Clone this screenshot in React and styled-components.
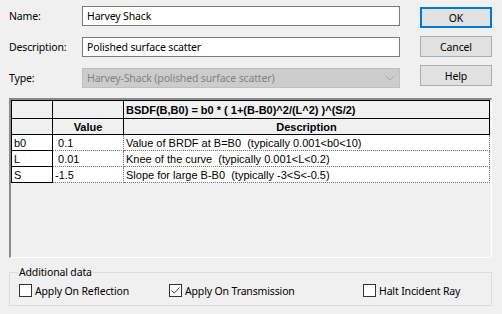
import React, { useState } from 'react';
import styled, { createGlobalStyle } from 'styled-components';

const GlobalStyle = createGlobalStyle`
    html, body {
        margin: 0;
        padding: 0;
        background-color: #f0f0f0;
    }
    * {
        box-sizing: border-box;
    }
`;

const Dialog = styled.div`
    width: 502px;
    height: 314px;
    background-color: #f0f0f0;
    font-family: "Noto Sans", "DejaVu Sans", sans-serif;
    font-size: 10.5px;
    letter-spacing: -0.15px;
    color: #000;
    padding: 6px 10px 0 9px;
    display: flex;
    flex-direction: column;
`;

const TopSection = styled.div`
    display: flex;
    flex-direction: row;
    justify-content: space-between;
`;

const Fields = styled.div`
    display: flex;
    flex-direction: column;
    gap: 11px;
`;

const FieldRow = styled.div`
    display: flex;
    flex-direction: row;
    align-items: center;
    height: 20px;
`;

const Label = styled.label`
    width: 73px;
`;

const TextInput = styled.input`
    width: 318px;
    height: 20px;
    padding: 0 4px;
    border: 1px solid #7a7a7a;
    background-color: #fff;
    font-family: inherit;
    font-size: inherit;
    letter-spacing: inherit;
    color: #000;
    outline: none;
`;

const FakeSelect = styled.div`
    width: 318px;
    height: 20px;
    padding: 0 4px;
    border: 1px solid #bfbfbf;
    background-color: #cccccc;
    color: #838383;
    display: flex;
    align-items: center;
    justify-content: space-between;
`;

const Buttons = styled.div`
    display: flex;
    flex-direction: column;
    gap: 8px;
    padding-top: 1px;
`;

const Button = styled.button`
    width: 72px;
    height: 21px;
    padding: 0;
    background-color: #e1e1e1;
    border: ${(p) => (p.$primary ? '2px solid #0078d7' : '1px solid #adadad')};
    font-family: inherit;
    font-size: inherit;
    letter-spacing: inherit;
    color: #000;
    cursor: pointer;
`;

const TablePanel = styled.div`
    margin-top: 10px;
    width: 483px;
    height: 160px;
    border-top: 2px solid #8a8a8a;
    border-left: 2px solid #8a8a8a;
    border-right: 1px solid #fff;
    border-bottom: 1px solid #fff;
    background-color: #f0f0f0;
`;

const Grid = styled.table`
    border-collapse: collapse;
    font-family: "Liberation Sans", Arial, sans-serif;
    font-size: 11px;
    letter-spacing: 0;
    table-layout: fixed;
    width: 479px;
`;

const HeadCell = styled.td`
    height: ${(p) => p.$h || 16}px;
    border: 1px solid #000;
    padding: 0 2px;
    font-weight: bold;
    text-align: ${(p) => p.$align || 'left'};
    white-space: nowrap;
    overflow: hidden;
`;

const KeyCell = styled.td`
    height: 16px;
    border: 1px solid #000;
    background-color: #fff;
    padding: 0 2px;
`;

const DataCell = styled.td`
    height: 16px;
    border: 1px dotted #7a7a7a;
    border-left: ${(p) => (p.$first ? '1px solid #000' : '1px dotted #7a7a7a')};
    background-color: #fff;
    padding: 0 2px;
    white-space: pre;
    overflow: hidden;
`;

const GroupBox = styled.fieldset`
    margin: 7px 0 0 0;
    width: 483px;
    height: 41px;
    border: 1px solid #dcdcdc;
    padding: 0 9px;
`;

const Legend = styled.legend`
    padding: 0 1px;
    margin-left: -1px;
    line-height: 15px;
`;

const CheckRow = styled.div`
    display: flex;
    flex-direction: row;
    align-items: center;
    padding-top: 4px;
`;

const CheckLabel = styled.label`
    display: flex;
    align-items: center;
    gap: 3px;
    width: ${(p) => (p.$w ? `${p.$w}px` : 'auto')};
    height: 13px;
`;

const Box = styled.span`
    width: 13px;
    height: 13px;
    border: 1px solid #333;
    background-color: #fff;
    display: inline-flex;
    align-items: center;
    justify-content: center;
`;

const rows = [
    { key: 'b0', value: ' 0.1', desc: 'Value of BRDF at B=B0  (typically 0.001<b0<10)' },
    { key: 'L', value: ' 0.01', desc: 'Knee of the curve  (typically 0.001<L<0.2)' },
    { key: 'S', value: '-1.5', desc: 'Slope for large B-B0  (typically -3<S<-0.5)' },
];

const Check = ({ checked, label, w, onToggle }) => (
    <CheckLabel $w={w} onClick={onToggle}>
        <Box>
            {checked && (
                <svg width="11" height="11" viewBox="0 0 11 11">
                    <path d="M1.5 5.5 L4.2 8.2 L9.5 2.5" fill="none" stroke="#444" strokeWidth="1" />
                </svg>
            )}
        </Box>
        {label}
    </CheckLabel>
);

const App = () => {
    const [name, setName] = useState('Harvey Shack');
    const [desc, setDesc] = useState('Polished surface scatter');
    const [flags, setFlags] = useState({ refl: false, trans: true, halt: false });

    const toggle = (k) => setFlags((prev) => ({ ...prev, [k]: !prev[k] }));

    return (
        <Dialog>
            <GlobalStyle />
            <TopSection>
                <Fields>
                    <FieldRow>
                        <Label>Name:</Label>
                        <TextInput value={name} onChange={(e) => setName(e.target.value)} />
                    </FieldRow>
                    <FieldRow>
                        <Label>Description:</Label>
                        <TextInput value={desc} onChange={(e) => setDesc(e.target.value)} />
                    </FieldRow>
                    <FieldRow>
                        <Label>Type:</Label>
                        <FakeSelect>
                            Harvey-Shack (polished surface scatter)
                            <svg width="10" height="6" viewBox="0 0 10 6">
                                <path d="M0.5 0.5 L5 5 L9.5 0.5" fill="none" stroke="#a8a8a8" strokeWidth="1" />
                            </svg>
                        </FakeSelect>
                    </FieldRow>
                </Fields>
                <Buttons>
                    <Button $primary>OK</Button>
                    <Button>Cancel</Button>
                    <Button>Help</Button>
                </Buttons>
            </TopSection>

            <TablePanel>
                <Grid>
                    <colgroup>
                        <col style={{ width: 41 }} />
                        <col style={{ width: 71 }} />
                        <col />
                    </colgroup>
                    <tbody>
                        <tr>
                            <HeadCell $h={18} />
                            <HeadCell $h={18} />
                            <HeadCell $h={18}>BSDF(B,B0) = b0 * ( 1+(B-B0)^2/(L^2) )^(S/2)</HeadCell>
                        </tr>
                        <tr>
                            <HeadCell />
                            <HeadCell $align="center">Value</HeadCell>
                            <HeadCell $align="center">Description</HeadCell>
                        </tr>
                        {rows.map((r) => (
                            <tr key={r.key}>
                                <KeyCell>{r.key}</KeyCell>
                                <DataCell $first>{r.value}</DataCell>
                                <DataCell>{r.desc}</DataCell>
                            </tr>
                        ))}
                    </tbody>
                </Grid>
            </TablePanel>

            <GroupBox>
                <Legend>Additional data</Legend>
                <CheckRow>
                    <Check w={150} label="Apply On Reflection" checked={flags.refl} onToggle={() => toggle('refl')} />
                    <Check w={194} label="Apply On Transmission" checked={flags.trans} onToggle={() => toggle('trans')} />
                    <Check label="Halt Incident Ray" checked={flags.halt} onToggle={() => toggle('halt')} />
                </CheckRow>
            </GroupBox>
        </Dialog>
    );
};

export default App;
